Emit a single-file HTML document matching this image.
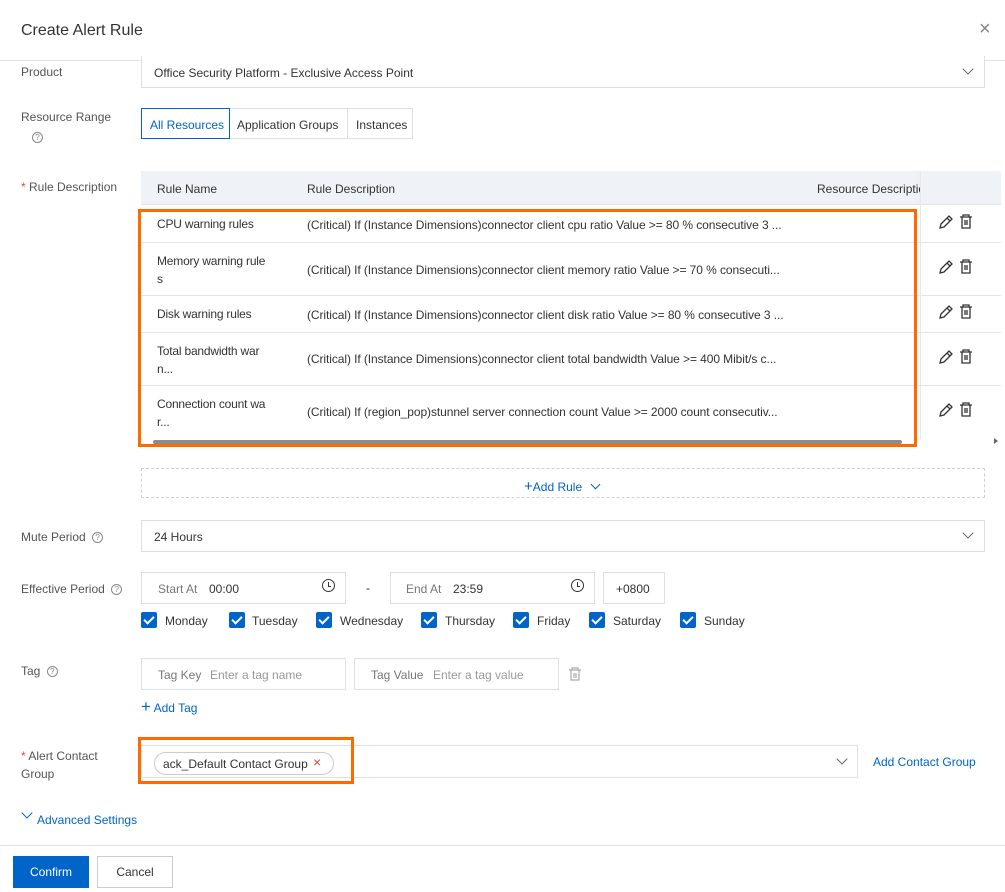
<!DOCTYPE html>
<html><head><meta charset="utf-8"><style>
*{box-sizing:border-box;margin:0;padding:0}
body{width:1005px;height:892px;background:#fff;font-family:"Liberation Sans",sans-serif;font-size:12px;color:#333;position:relative;overflow:hidden}
.a{position:absolute;white-space:nowrap}
.box{position:absolute;border:1px solid #dcdfe3;background:#fff}
.lbl{position:absolute;color:#555;font-size:12px;white-space:nowrap}
.q{display:inline-block;width:11px;height:11px;border:1px solid #888;border-radius:50%;font-size:8px;line-height:9px;text-align:center;color:#888;vertical-align:middle;margin-left:3px}
.chev{position:absolute;width:8px;height:8px;border-right:1.3px solid #666;border-bottom:1.3px solid #666;transform:rotate(45deg)}
.cb{position:absolute;width:16px;height:16px;background:#0064c8;border-radius:2px}
.cb:after{content:"";position:absolute;left:5px;top:2px;width:4px;height:8px;border-right:2px solid #fff;border-bottom:2px solid #fff;transform:rotate(45deg)}
.blue{color:#0064c8}
.row{position:absolute;left:141px;width:860px;border-bottom:1px solid #e5e5e5}
.desc{position:absolute;left:307px;width:485px;overflow:hidden;white-space:nowrap;letter-spacing:-0.08px}
.nm{position:absolute;left:157px;width:118px;line-height:18px;letter-spacing:-0.2px}
.ic{position:absolute;left:938px}
</style></head><body>
<div class="a" style="left:21px;top:22px;font-size:16px;color:#333">Create Alert Rule</div>
<div class="a" style="left:979px;top:18px;font-size:20px;color:#888;font-weight:300">×</div>
<div class="a" style="left:0;top:60px;width:1005px;height:1px;background:#e3e3e3"></div>

<div class="lbl" style="left:21px;top:65px">Product</div>
<div class="box" style="left:141px;top:56px;width:844px;height:32px;border-top:none"></div>
<div class="a" style="left:154px;top:66px">Office Security Platform - Exclusive Access Point</div>
<div class="chev" style="left:964px;top:65px"></div>

<div class="lbl" style="left:21px;top:110px">Resource Range</div>
<div class="a" style="left:29px;top:130px"><span class="q">?</span></div>
<div class="box" style="left:229px;top:108px;width:119px;height:31px"></div>
<div class="box" style="left:347px;top:108px;width:66px;height:31px"></div>
<div class="box" style="left:141px;top:108px;width:89px;height:31px;border-color:#0064c8"></div>
<div class="a blue" style="left:150px;top:118px">All Resources</div>
<div class="a" style="left:237px;top:118px">Application Groups</div>
<div class="a" style="left:356px;top:118px">Instances</div>

<div class="lbl" style="left:21px;top:180px"><span style="color:#e84738">*</span> Rule Description</div>
<div class="a" style="left:141px;top:171px;width:860px;height:34px;background:#eff2f6;border-bottom:1px solid #e5e5e5"></div>
<div class="a" style="left:157px;top:182px">Rule Name</div>
<div class="a" style="left:307px;top:182px">Rule Description</div>
<div class="a" style="left:817px;top:182px;width:103px;overflow:hidden">Resource Description</div>
<div class="a" style="left:920px;top:171px;width:1px;height:268px;background:#e8e8e8;box-shadow:-2px 0 3px rgba(0,0,0,.05)"></div>

<div class="row" style="top:205px;height:38px"></div>
<div class="row" style="top:242px;height:54px"></div>
<div class="row" style="top:295px;height:38px"></div>
<div class="row" style="top:332px;height:54px"></div>
<div class="row" style="top:385px;height:54px;border:none"></div>

<div class="nm" style="top:215px">CPU warning rules</div>
<div class="desc" style="top:218px">(Critical) If (Instance Dimensions)connector client cpu ratio Value &gt;= 80 % consecutive 3 ...</div>
<div class="nm" style="top:252px">Memory warning rule<br>s</div>
<div class="desc" style="top:263px">(Critical) If (Instance Dimensions)connector client memory ratio Value &gt;= 70 % consecuti...</div>
<div class="nm" style="top:305px">Disk warning rules</div>
<div class="desc" style="top:308px">(Critical) If (Instance Dimensions)connector client disk ratio Value &gt;= 80 % consecutive 3 ...</div>
<div class="nm" style="top:342px">Total bandwidth war<br>n...</div>
<div class="desc" style="top:352px">(Critical) If (Instance Dimensions)connector client total bandwidth Value &gt;= 400 Mibit/s c...</div>
<div class="nm" style="top:395px">Connection count wa<br>r...</div>
<div class="desc" style="top:405px">(Critical) If (region_pop)stunnel server connection count Value &gt;= 2000 count consecutiv...</div>

<svg class="ic" style="top:214px" width="40" height="210" viewBox="0 0 40 210">
<g fill="none" stroke="#333" stroke-width="1.3">
<g id="r"><path d="M2 14 L3 10 L11 2 L14 5 L6 13 Z M9 4 L12 7"/><path d="M22 3h12M25 3v-2h6v2M24 3v11h8v-11M27 6v5M29 6v5"/></g>
<use href="#r" y="45"/><use href="#r" y="90"/><use href="#r" y="135"/><use href="#r" y="188"/>
</g></svg>

<div class="a" style="left:153px;top:440px;width:749px;height:4px;background:#8c8c8c;border-radius:2px"></div>
<div class="a" style="left:994px;top:438px;width:0;height:0;border-left:4px solid #666;border-top:3px solid transparent;border-bottom:3px solid transparent"></div>
<div class="a" style="left:138px;top:209px;width:779px;height:238px;border:3px solid #ff6a00"></div>

<div class="a" style="left:141px;top:468px;width:844px;height:30px;border:1px dashed #d0d0d0"></div>
<div class="a blue" style="left:524px;top:480px"><span style="font-size:15px;line-height:10px">+</span>Add Rule</div>
<div class="chev" style="left:592px;top:481px;border-color:#0064c8;width:7px;height:7px"></div>

<div class="lbl" style="left:21px;top:530px">Mute Period <span class="q">?</span></div>
<div class="box" style="left:141px;top:520px;width:844px;height:32px"></div>
<div class="a" style="left:154px;top:530px">24 Hours</div>
<div class="chev" style="left:964px;top:529px"></div>

<div class="lbl" style="left:21px;top:582px">Effective Period <span class="q">?</span></div>
<div class="box" style="left:141px;top:572px;width:205px;height:32px"></div>
<div class="a" style="left:158px;top:582px;color:#777">Start At</div>
<div class="a" style="left:209px;top:582px">00:00</div>
<div class="a" style="left:322px;top:579px;width:13px;height:13px;border:1.5px solid #333;border-radius:50%"></div>
<div class="a" style="left:327.5px;top:582px;width:3px;height:5px;border-left:1.5px solid #333;border-bottom:1.5px solid #333"></div>
<div class="a" style="left:366px;top:581px">-</div>
<div class="box" style="left:390px;top:572px;width:205px;height:32px"></div>
<div class="a" style="left:406px;top:582px;color:#777">End At</div>
<div class="a" style="left:453px;top:582px">23:59</div>
<div class="a" style="left:571px;top:579px;width:13px;height:13px;border:1.5px solid #333;border-radius:50%"></div>
<div class="a" style="left:576.5px;top:582px;width:3px;height:5px;border-left:1.5px solid #333;border-bottom:1.5px solid #333"></div>
<div class="box" style="left:603px;top:572px;width:62px;height:32px"></div>
<div class="a" style="left:616px;top:582px">+0800</div>

<div class="cb" style="left:141px;top:612px"></div><div class="a" style="left:165px;top:614px">Monday</div>
<div class="cb" style="left:229px;top:612px"></div><div class="a" style="left:252px;top:614px">Tuesday</div>
<div class="cb" style="left:316px;top:612px"></div><div class="a" style="left:340px;top:614px">Wednesday</div>
<div class="cb" style="left:421px;top:612px"></div><div class="a" style="left:445px;top:614px">Thursday</div>
<div class="cb" style="left:513px;top:612px"></div><div class="a" style="left:537px;top:614px">Friday</div>
<div class="cb" style="left:589px;top:612px"></div><div class="a" style="left:613px;top:614px">Saturday</div>
<div class="cb" style="left:680px;top:612px"></div><div class="a" style="left:704px;top:614px">Sunday</div>

<div class="lbl" style="left:21px;top:664px">Tag <span class="q">?</span></div>
<div class="box" style="left:141px;top:658px;width:205px;height:32px"></div>
<div class="a" style="left:158px;top:668px;color:#777">Tag Key</div>
<div class="a" style="left:210px;top:668px;color:#999">Enter a tag name</div>
<div class="box" style="left:354px;top:658px;width:205px;height:32px"></div>
<div class="a" style="left:371px;top:668px;color:#777">Tag Value</div>
<div class="a" style="left:433px;top:668px;color:#999">Enter a tag value</div>
<svg class="a" style="left:568px;top:667px" width="14" height="14"><g fill="none" stroke="#aaa" stroke-width="1.2"><path d="M1 3h12M4 3v-2h6v2M3 3v10h8v-10M6 6v5M8 6v5"/></g></svg>
<div class="a blue" style="left:141px;top:701px"><span style="font-size:17px;line-height:10px">+</span> Add Tag</div>

<div class="lbl" style="left:21px;top:747px;line-height:18px"><span style="color:#e84738">*</span> Alert Contact<br>Group</div>
<div class="box" style="left:141px;top:745px;width:717px;height:33px"></div>
<div class="chev" style="left:838px;top:755px"></div>
<div class="a" style="left:154px;top:752px;width:180px;height:23px;border:1px solid #ccc;border-radius:12px"></div>
<div class="a" style="left:163px;top:757px">ack_Default Contact Group</div>
<div class="a" style="left:313px;top:754px;color:#e84738;font-size:14px">×</div>
<div class="a" style="left:138px;top:737px;width:216px;height:47px;border:3px solid #ff6a00"></div>
<div class="a blue" style="left:873px;top:755px">Add Contact Group</div>

<div class="chev" style="left:23px;top:809px;border-color:#0064c8;width:8px;height:8px"></div>
<div class="a blue" style="left:37px;top:813px">Advanced Settings</div>

<div class="a" style="left:0;top:845px;width:1005px;height:1px;background:#e3e3e3"></div>
<div class="a" style="left:13px;top:856px;width:76px;height:32px;background:#0064c8;color:#fff;text-align:center;line-height:32px">Confirm</div>
<div class="a" style="left:97px;top:856px;width:76px;height:32px;border:1px solid #ccc;text-align:center;line-height:30px">Cancel</div>
</body></html>
